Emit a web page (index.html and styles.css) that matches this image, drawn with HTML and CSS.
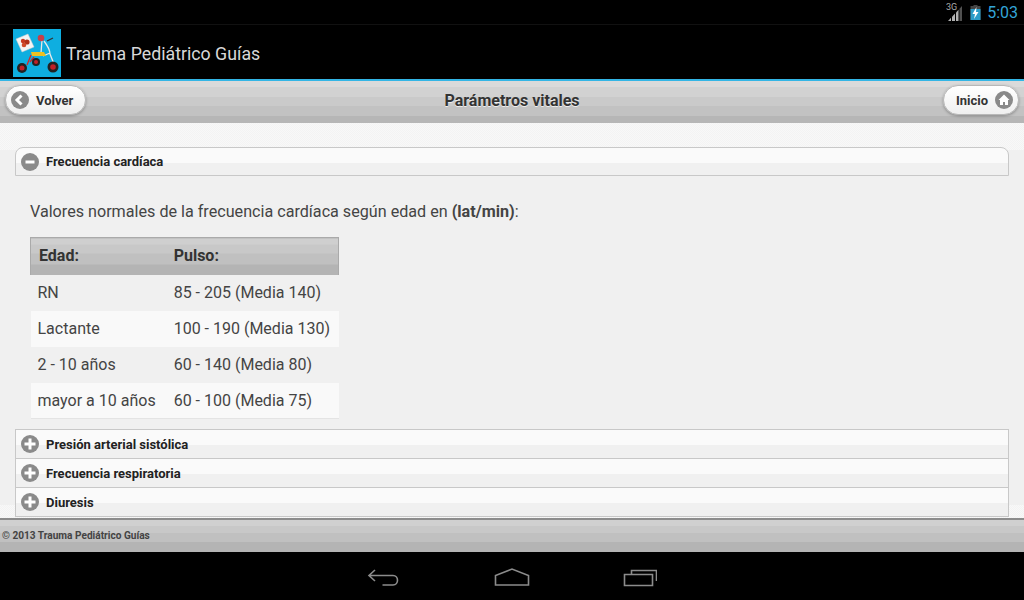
FILE: index.html
```html
<!DOCTYPE html>
<html lang="es">
<head>
<meta charset="utf-8">
<title>Trauma Pediátrico Guías</title>
<link rel="stylesheet" href="styles.css">
</head>
<body>
<div class="statusbar">
  <svg class="sig" width="18" height="20" viewBox="0 0 18 20">
    <text x="0" y="8" class="sig-text">3G</text>
    <path d="M2 19l3-3.200V19z" fill="#b0b0b0"/>
    <path d="M6 19v-4.300l3-3.200V19z" fill="#b0b0b0"/>
    <path d="M10 19v-8.500l2.500-2.700V19z" fill="#b0b0b0"/>
    <path d="M13.500 19V6.800L16 4v15z" fill="#505050"/>
  </svg>
  <svg class="batt" width="11" height="15" viewBox="0 0 11 15">
    <path d="M3.500 0h4v1h3v14H.5V1h3z" fill="#444"/>
    <path d="M.5 4h10v11H.5z" fill="#2a9cc8"/>
    <path d="M6.500 2 2.500 9h2.500l-1 5 4.500-7H6z" fill="#fff"/>
  </svg>
  <span class="clock">5:03</span>
</div>
<div class="actionbar">
  <svg class="logo" width="48" height="48" viewBox="0 0 48 48">
    <rect width="48" height="48" fill="#0eaee0"/>
    <path d="M3 10 15 5l6 13-12 5z" fill="#f4f4f4" stroke="#ccc" stroke-width=".5"/>
    <circle cx="10" cy="12" r="2.200" fill="#c83a20"/>
    <circle cx="14" cy="13" r="2.600" fill="#b03018"/>
    <circle cx="11" cy="16" r="2.300" fill="#d04a28"/>
    <path d="M31 12Q37 20 37 25L41 35M37 24 30 27M29 11 28 24" fill="none" stroke="#e8e8e8" stroke-width="1.300"/>
    <path d="M40 9l-6 3" fill="none" stroke="#333" stroke-width="1.300"/>
    <circle cx="28" cy="9" r="3.300" fill="#c84048"/>
    <path d="M18 23h13l2 4H19z" fill="#eec020"/>
    <path d="M18 26 14 36M21 28 17 33" fill="none" stroke="#d02828" stroke-width="1.300"/>
    <circle cx="9" cy="39" r="5" fill="#222"/><circle cx="9" cy="39" r="2.500" fill="#c02028"/>
    <circle cx="23" cy="33" r="4" fill="#222"/><circle cx="23" cy="33" r="2" fill="#c02028"/>
    <circle cx="40" cy="38" r="5.500" fill="#222"/><circle cx="40" cy="38" r="2.800" fill="#c02028"/>
  </svg>
  <span class="apptitle">Trauma Pediátrico Guías</span>
</div>
<header class="pagehead">
  <a class="btn btn-left">
    <span class="ico"><svg width="18" height="18" viewBox="0 0 18 18"><path d="M10.500 4.500 6 9l4.500 4.500" fill="none" stroke="#fff" stroke-width="3"/></svg></span>
    <span>Volver</span>
  </a>
  <h1 class="pagetitle">Parámetros vitales</h1>
  <a class="btn btn-right">
    <span>Inicio</span>
    <span class="ico"><svg width="18" height="18" viewBox="0 0 18 18"><path d="M9 3.500 3.500 9H5v5h3v-3h2v3h3V9h1.500z" fill="#fff"/></svg></span>
  </a>
</header>
<main class="content">
  <section class="coll open">
    <div class="coll-head">
      <span class="ico"><svg width="18" height="18" viewBox="0 0 18 18"><path d="M4.500 7.500h9v3h-9z" fill="#fff"/></svg></span>
      <span>Frecuencia cardíaca</span>
    </div>
    <div class="coll-body">
      <p class="lead">Valores normales de la frecuencia cardíaca según edad en <b>(lat/min)</b>:</p>
      <table class="vitals">
        <thead><tr><th>Edad:</th><th>Pulso:</th></tr></thead>
        <tbody>
          <tr><td>RN</td><td>85 - 205 (Media 140)</td></tr>
          <tr><td>Lactante</td><td>100 - 190 (Media 130)</td></tr>
          <tr><td>2 - 10 años</td><td>60 - 140 (Media 80)</td></tr>
          <tr><td>mayor a 10 años</td><td>60 - 100 (Media 75)</td></tr>
        </tbody>
      </table>
    </div>
  </section>
  <section class="coll">
    <div class="coll-head"><span class="ico"><svg width="18" height="18" viewBox="0 0 18 18"><path d="M7.500 3.500h3v4h4v3h-4v4h-3v-4h-4v-3h4z" fill="#fff"/></svg></span><span>Presión arterial sistólica</span></div>
  </section>
  <section class="coll">
    <div class="coll-head"><span class="ico"><svg width="18" height="18" viewBox="0 0 18 18"><path d="M7.500 3.500h3v4h4v3h-4v4h-3v-4h-4v-3h4z" fill="#fff"/></svg></span><span>Frecuencia respiratoria</span></div>
  </section>
  <section class="coll">
    <div class="coll-head"><span class="ico"><svg width="18" height="18" viewBox="0 0 18 18"><path d="M7.500 3.500h3v4h4v3h-4v4h-3v-4h-4v-3h4z" fill="#fff"/></svg></span><span>Diuresis</span></div>
  </section>
</main>
<footer class="pagefoot">© 2013 Trauma Pediátrico Guías</footer>
<nav class="navbar">
  <svg width="34" height="20" viewBox="0 0 34 20"><path d="M8 2 2 7.500 8 13M2.500 7.500H26c6 0 6 9.500 0 9.500H15.500" fill="none" stroke="#8c8c8c" stroke-width="1.600"/></svg>
  <svg width="36" height="20" viewBox="0 0 36 20"><path d="M1.500 17V7.500L18 1l16.500 6.500V17z" fill="none" stroke="#8c8c8c" stroke-width="1.600"/></svg>
  <svg width="34" height="20" viewBox="0 0 34 20"><path d="M1.500 6.500h28v11h-28zM8.500 6V2.500h25V13" fill="none" stroke="#8c8c8c" stroke-width="1.600"/></svg>
</nav>
</body>
</html>
```

FILE: styles.css
```css
* { box-sizing: border-box; }
html, body { margin: 0; height: 600px; overflow: hidden; }
body {
  display: flex;
  flex-direction: column;
  width: 1024px;
  background: #000;
  font-family: Roboto, "Liberation Sans", sans-serif;
  color: #333;
}
.statusbar {
  height: 25px;
  flex: none;
  display: flex;
  align-items: center;
  justify-content: flex-end;
  padding-right: 6px;
  border-bottom: 1px solid #111;
}
.sig { margin-right: 6px; }
.sig-text { font: 9px Roboto, sans-serif; fill: #aaa; }
.batt { margin-right: 6px; }
.clock { color: #33a5d8; font-size: 16px; }
.actionbar {
  height: 54px;
  flex: none;
  display: flex;
  align-items: center;
  padding: 2px 0 0 13px;
}
.logo { margin-right: 5px; }
.apptitle { color: #d8d8d8; font-size: 17.750px; padding-top: 2px; }
.pagehead {
  height: 44px;
  flex: none;
  border-top: 2px solid #33b5e5;
  display: grid;
  grid-template-columns: 1fr auto 1fr;
  align-items: center;
  padding: 0 5px 4px;
  background: linear-gradient(#dadada 0 6px, #d2d2d2 6px 16px, #cacaca 16px 25px, #c2c2c2 25px 35px, #b6b6b6 35px);
}
.pagetitle {
  margin: 0;
  font-size: 16px;
  font-weight: 700;
  color: #333;
  text-shadow: 0 1px 0 #eee;
}
.btn {
  display: flex;
  align-items: center;
  height: 30px;
  border: 1px solid #b8b8b8;
  border-radius: 15px;
  background: linear-gradient(#fff, #efefef);
  box-shadow: 0 1px 3px rgba(0,0,0,.3);
  font-size: 13px;
  font-weight: 700;
  color: #333;
}
.btn-left { justify-self: start; padding: 0 12px 0 5px; gap: 7px; }
.btn-right { justify-self: end; padding: 0 5px 0 12px; gap: 7px; }
.ico {
  width: 18px;
  height: 18px;
  flex: none;
  border-radius: 50%;
  background: #8a8a8a;
  display: block;
}
.ico svg { display: block; }
.content {
  flex: 1;
  min-height: 0;
  overflow: hidden;
  padding: 24px 15px 0;
  background:
    linear-gradient(transparent 0 27px, #f0f0f0 27px calc(100% - 13px), transparent calc(100% - 13px)),
    repeating-conic-gradient(#f3f3f3 0 25%, #f8f8f8 0 50%) 0 0 / 2px 2px;
}
.coll-head {
  height: 29px;
  display: flex;
  align-items: center;
  gap: 7px;
  padding-left: 5px;
  border: 1px solid #c8c8c8;
  background: linear-gradient(#fafafa 0 15px, #f0f0f0 15px);
  font-size: 13px;
  font-weight: 700;
  color: #222;
}
.coll + .coll .coll-head { border-top: 0; }
.coll.open + .coll .coll-head { border-top: 1px solid #c8c8c8; height: 30px; }
.coll.open .coll-head { border-radius: 8px 8px 0 0; }
.coll-body { padding: 0 15px 10px; }
.lead { margin: 0; padding-top: 26px; height: 61px; font-size: 16.150px; line-height: 19px; color: #444; }
.vitals { border-collapse: collapse; font-size: 16px; color: #444; }
.vitals th {
  height: 37px;
  padding: 0 9px 2px;
  text-align: left;
  font-weight: 700;
  color: #333;
  border-top: 1px solid #aaa;
  background: linear-gradient(#cfcfcf 0 6px, #c8c8c8 6px 15px, #c0c0c0 15px 26px, #b4b4b4 26px);
}
.vitals th:first-child { padding-left: 8px; border-left: 1px solid #aaa; }
.vitals th:last-child { padding-left: 9px; border-right: 1px solid #aaa; }
.vitals td { height: 36px; padding: 0 9px 0 7px; white-space: nowrap; background: #f0f0f0; }
.vitals td:last-child { padding-left: 9px; }
.vitals tr:nth-child(even) td { background: #f9f9f9; }
.vitals tr:last-child td { border-bottom: 1px solid #e4e4e4; }
.pagefoot {
  height: 34px;
  flex: none;
  border-top: 2px solid #8c8c8c;
  padding: 10px 0 0 2px;
  font-size: 10.100px;
  font-weight: 700;
  color: #444;
  background: linear-gradient(#d0d0d0 0 6px, #c8c8c8 6px 13px, #c0c0c0 13px 22px, #b4b4b4 22px);
}
.navbar {
  height: 48px;
  flex: none;
  display: flex;
  justify-content: center;
  align-items: center;
  gap: 93px;
  padding: 4px 0 0 0;
  background: #000;
}
```
